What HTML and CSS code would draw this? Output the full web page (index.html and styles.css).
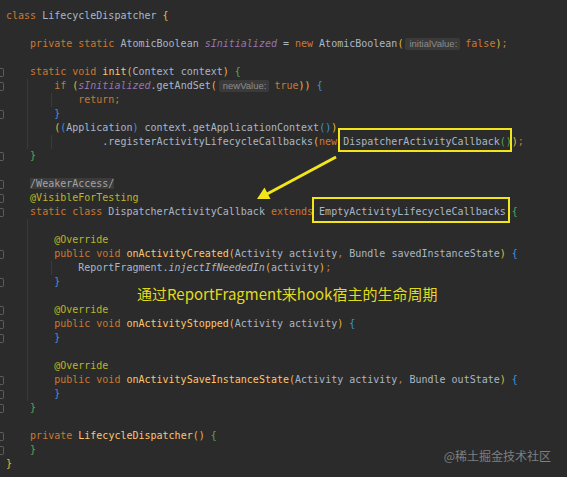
FILE: index.html
```html
<!DOCTYPE html>
<html lang="en">
<head>
    <meta charset="UTF-8">
    <meta name="viewport" content="width=device-width, initial-scale=1.0">
    <title>LifecycleDispatcher</title>
    <link rel="stylesheet" href="styles.css">
</head>
<body>
    <div class="editor">
        <div class="code-area">
            <div class="ln"><span class="gut"></span><span class="code"><span class="k">class</span> LifecycleDispatcher <span class="b1">{</span></span></div>
            <div class="ln"><span class="gut"></span><span class="code"></span></div>
            <div class="ln"><span class="gut"></span><span class="code">    <span class="k">private static</span> AtomicBoolean <span class="f">sInitialized</span> = <span class="k">new</span> AtomicBoolean<span class="b1">(</span><span class="hint">initialValue:</span><span class="k">false</span><span class="b1">)</span><span class="k">;</span></span></div>
            <div class="ln"><span class="gut"></span><span class="code"></span></div>
            <div class="ln"><span class="gut"><span class="fold"></span></span><span class="code">    <span class="k">static void</span> <span class="m">init</span><span class="b1">(</span>Context context<span class="b1">)</span> <span class="b2">{</span></span></div>
            <div class="ln g4"><span class="gut"><span class="fold"></span></span><span class="code">        <span class="k">if</span> <span class="b1">(</span><span class="f">sInitialized</span>.getAndSet<span class="b1">(</span><span class="hint">newValue:</span><span class="k">true</span><span class="b1">)</span><span class="b1">)</span> <span class="b3">{</span></span></div>
            <div class="ln g4 g8"><span class="gut"></span><span class="code">            <span class="k">return;</span></span></div>
            <div class="ln g4"><span class="gut"><span class="fold"></span></span><span class="code">        <span class="b3">}</span></span></div>
            <div class="ln g4"><span class="gut"></span><span class="code">        <span class="b1">(</span><span class="b3">(</span>Application<span class="b3">)</span> context.getApplicationContext<span class="b3">()</span><span class="b1">)</span></span></div>
            <div class="ln g4 g8"><span class="gut"></span><span class="code">                .registerActivityLifecycleCallbacks<span class="b1">(</span><span class="k">new</span> DispatcherActivityCallback<span class="b2">()</span><span class="b1">)</span><span class="k">;</span></span></div>
            <div class="ln"><span class="gut"><span class="fold"></span></span><span class="code">    <span class="b2">}</span></span></div>
            <div class="ln"><span class="gut"></span><span class="code"></span></div>
            <div class="ln"><span class="gut"><span class="fold"></span></span><span class="code">    <span class="folded">/WeakerAccess/</span></span></div>
            <div class="ln"><span class="gut"><span class="fold"></span></span><span class="code">    <span class="a">@VisibleForTesting</span></span></div>
            <div class="ln"><span class="gut"><span class="fold"></span></span><span class="code">    <span class="k">static class</span> DispatcherActivityCallback <span class="k">extends</span> EmptyActivityLifecycleCallbacks <span class="b2">{</span></span></div>
            <div class="ln g4"><span class="gut"></span><span class="code"></span></div>
            <div class="ln g4"><span class="gut"></span><span class="code">        <span class="a">@Override</span></span></div>
            <div class="ln g4"><span class="gut"><span class="fold"></span></span><span class="code">        <span class="k">public void</span> <span class="m">onActivityCreated</span><span class="b1">(</span>Activity activity<span class="k">,</span> Bundle savedInstanceState<span class="b1">)</span> <span class="b3">{</span></span></div>
            <div class="ln g4 g8"><span class="gut"></span><span class="code">            ReportFragment.<span class="i">injectIfNeededIn</span><span class="b1">(</span>activity<span class="b1">)</span><span class="k">;</span></span></div>
            <div class="ln g4"><span class="gut"><span class="fold"></span></span><span class="code">        <span class="b3">}</span></span></div>
            <div class="ln g4"><span class="gut"></span><span class="code"><span class="note">通过ReportFragment来hook宿主的生命周期</span></span></div>
            <div class="ln g4"><span class="gut"><span class="fold"></span></span><span class="code">        <span class="a">@Override</span></span></div>
            <div class="ln g4"><span class="gut"><span class="fold"></span></span><span class="code">        <span class="k">public void</span> <span class="m">onActivityStopped</span><span class="b1">(</span>Activity activity<span class="b1">)</span> <span class="b3">{</span></span></div>
            <div class="ln g4"><span class="gut"><span class="fold"></span></span><span class="code">        <span class="b3">}</span></span></div>
            <div class="ln g4"><span class="gut"></span><span class="code"></span></div>
            <div class="ln g4"><span class="gut"></span><span class="code">        <span class="a">@Override</span></span></div>
            <div class="ln g4"><span class="gut"><span class="fold"></span></span><span class="code">        <span class="k">public void</span> <span class="m">onActivitySaveInstanceState</span><span class="b1">(</span>Activity activity<span class="k">,</span> Bundle outState<span class="b1">)</span> <span class="b3">{</span></span></div>
            <div class="ln g4"><span class="gut"><span class="fold"></span></span><span class="code">        <span class="b3">}</span></span></div>
            <div class="ln"><span class="gut"><span class="fold"></span></span><span class="code">    <span class="b2">}</span></span></div>
            <div class="ln"><span class="gut"></span><span class="code"></span></div>
            <div class="ln"><span class="gut"><span class="fold"></span></span><span class="code">    <span class="k">private</span> <span class="m">LifecycleDispatcher</span><span class="b1">()</span> <span class="b2">{</span></span></div>
            <div class="ln"><span class="gut"><span class="fold"></span></span><span class="code">    <span class="b2">}</span></span></div>
            <div class="ln"><span class="gut"></span><span class="code"><span class="b1">}</span></span></div>
        </div>

        <!-- annotation drawn over the code -->
        <svg class="marks" width="567" height="477" viewBox="0 0 567 477">
            <rect x="339" y="129" width="172" height="22" fill="none" stroke="#f3e51b" stroke-width="2"/>
            <rect x="313" y="198" width="196" height="24" fill="none" stroke="#f3e51b" stroke-width="2"/>
            <line x1="336" y1="157" x2="267" y2="194" stroke="#f3e51b" stroke-width="3"/>
            <polygon points="257,199 270.5,199 264.5,187.5" fill="#f3e51b"/>
        </svg>

        <div class="watermark">@稀土掘金技术社区</div>
    </div>
</body>
</html>
```

FILE: styles.css
```css
body {
    margin: 0;
    background-color: #2b2b2b;
    overflow: hidden;
}

.editor {
    position: relative;
    width: 567px;
    height: 477px;
    background-color: #2b2b2b;
    overflow: hidden;
}

.code-area {
    padding-top: 9px;
    font-family: "DejaVu Sans Mono", monospace;
    font-size: 10px;
    color: #a9b7c6;
}

.ln {
    display: flex;
    height: 14px;
    line-height: 14px;
}

/* indent guides */
.g4 {
    background: linear-gradient(#3a3a3a, #3a3a3a) no-repeat 27px 0 / 1px 100%;
}

.g4.g8 {
    background:
        linear-gradient(#3a3a3a, #3a3a3a) no-repeat 27px 0 / 1px 100%,
        linear-gradient(#3a3a3a, #3a3a3a) no-repeat 51px 0 / 1px 100%;
}

.gut {
    width: 5px;
    flex-shrink: 0;
    display: flex;
    align-items: center;
}

.fold {
    width: 3px;
    height: 7px;
    border: 1px solid #5c5c5c;
    border-left: none;
    border-radius: 0 2px 2px 0;
}

.code {
    flex: 1;
    padding-left: 1px;
    white-space: pre;
}

.k { color: #cc7832; }
.f { color: #9876aa; font-style: italic; }
.m { color: #ffc66d; }
.a { color: #bbb529; }
.i { font-style: italic; }

.b1 { color: #e8ba36; }
.b2 { color: #54a857; }
.b3 { color: #3e93dc; }

.hint {
    display: inline-block;
    font-family: "Liberation Sans", sans-serif;
    font-size: 9.5px;
    line-height: 12px;
    color: #8c8c8c;
    background-color: #3a3a3a;
    padding: 0 3px 0 4px;
    margin: 0 5px 0 2px;
    border-radius: 2px;
}

.folded {
    color: #a4a4a4;
    background-color: #3b3b3b;
}

.note {
    display: inline-block;
    margin-left: 131px;
    font-family: "Noto Sans CJK SC", sans-serif;
    font-size: 15px;
    color: #e0dc1c;
    transform: translateY(-2px);
}

.marks {
    position: absolute;
    top: 0;
    left: 0;
    pointer-events: none;
}

.watermark {
    position: absolute;
    right: 16px;
    bottom: 13px;
    font-family: "Noto Sans CJK SC", sans-serif;
    font-size: 12px;
    line-height: 16px;
    color: #7f7f7f;
}
```
